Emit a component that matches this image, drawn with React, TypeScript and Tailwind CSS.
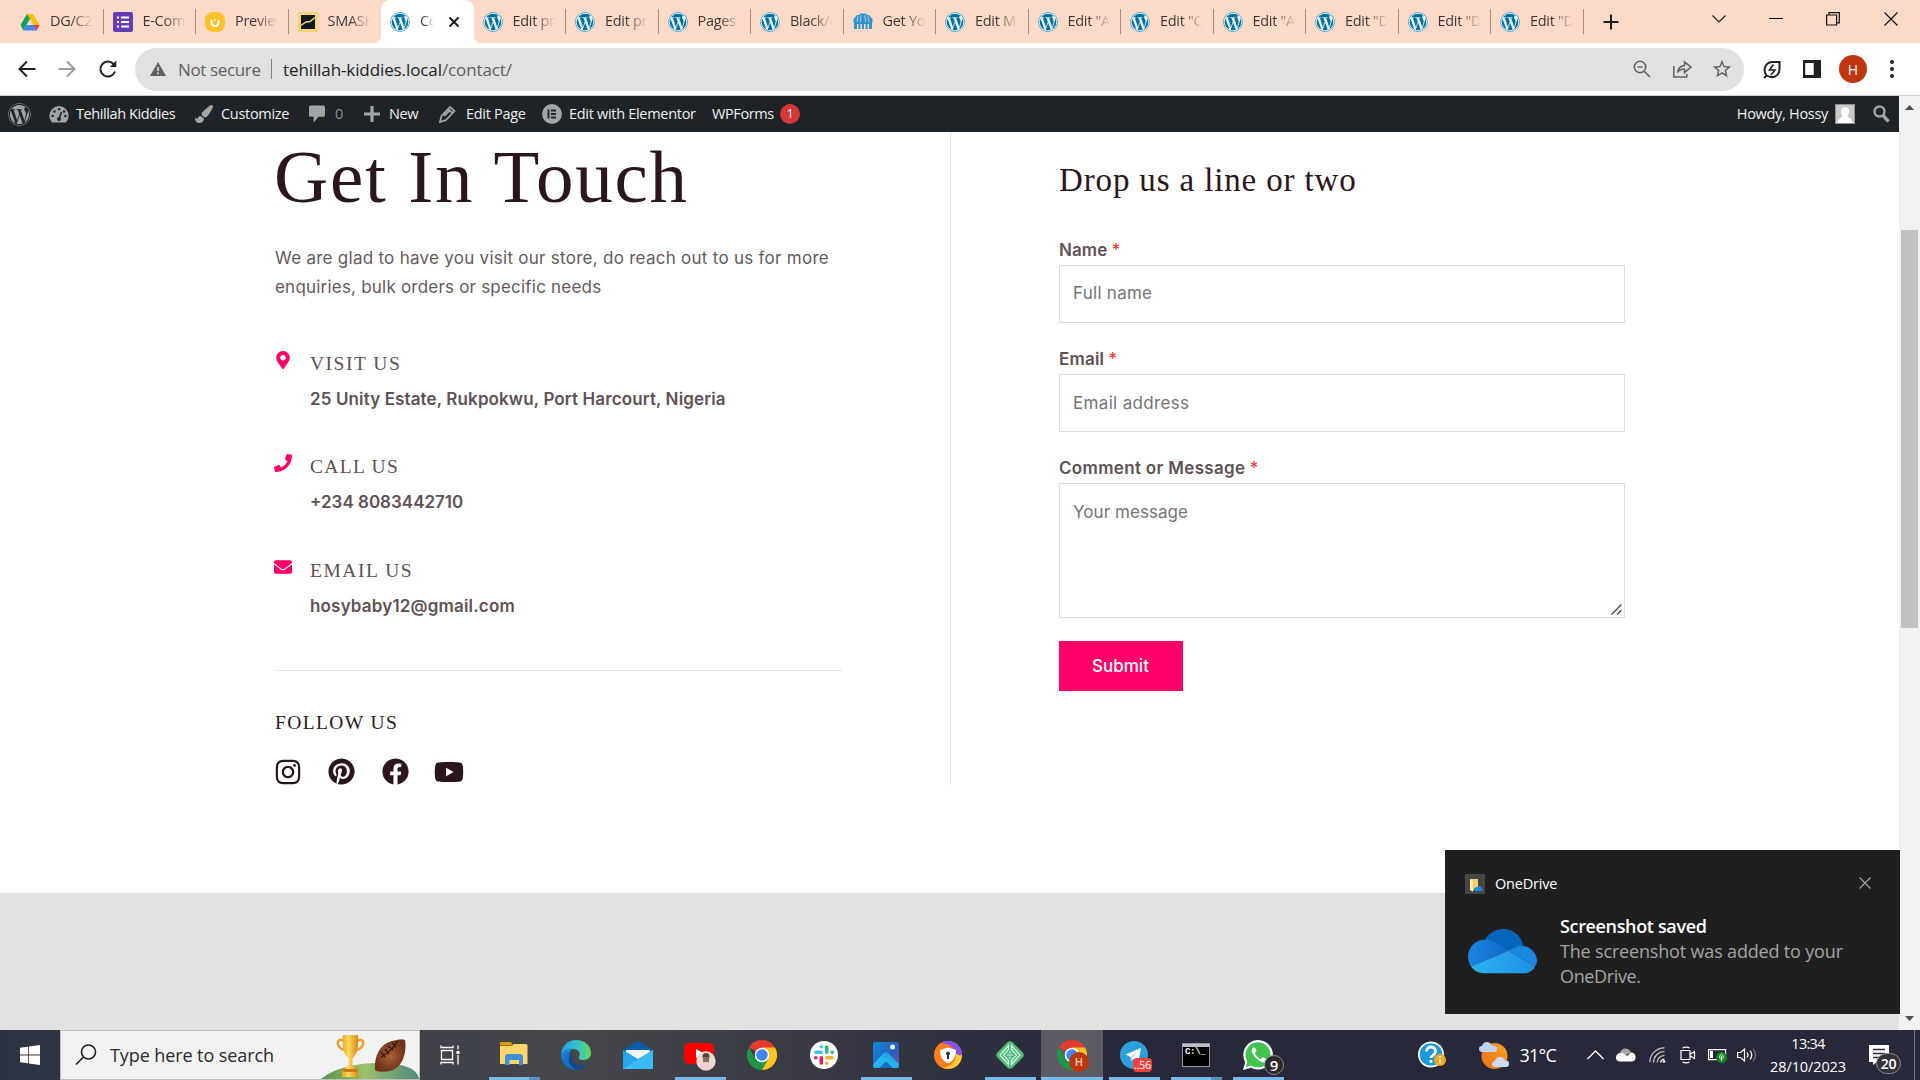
import type { ReactNode } from "react";
import { FaWordpress, FaFacebook, FaPinterest, FaYoutube, FaInstagram, FaPaintBrush, FaMapMarkerAlt, FaPhone, FaEnvelope } from "react-icons/fa";
import { MdStarOutline } from "react-icons/md";

/* ---------- favicons ---------- */
const WpFavicon = () => (
  <span className="flex size-5 items-center justify-center rounded-full bg-[#e9f1f4]">
    <FaWordpress size={20} color="#0073a3" />
  </span>
);
const Drive = () => (
  <svg width="20" height="20" viewBox="0 0 20 20">
    <path d="M7 2h6l-6.300 11L3.400 18.500.5 13z" fill="#12a15a" />
    <path d="M7 2h6l6.500 11h-6z" fill="#fbbc05" />
    <path d="M6.500 13h13l-3 5.500h-13z" fill="#4285f4" />
    <path d="M13.500 13h6l-3 5.500z" fill="#ea4335" />
    <path d="M10 7l3.500 6h-7z" fill="#fcdac8" />
  </svg>
);
const Forms = () => (
  <svg width="20" height="20" viewBox="0 0 20 20">
    <rect width="20" height="20" rx="2" fill="#673ab7" />
    <path d="M4 5.500h2M4 10h2M4 14.500h2M8 5.500h8M8 10h8M8 14.500h8" stroke="#fff" strokeWidth="2" />
  </svg>
);
const Smile = () => (
  <svg width="20" height="20" viewBox="0 0 20 20">
    <rect width="20" height="20" rx="8" fill="#fdc12a" />
    <path d="M6.500 8v2.500a3.500 3.500 0 0 0 7 0V8" fill="none" stroke="#fff" strokeWidth="2" />
    <circle cx="10" cy="8" r="1" fill="#fff" />
  </svg>
);
const Smash = () => (
  <svg width="20" height="20" viewBox="0 0 20 20">
    <rect width="20" height="20" rx="1" fill="#f8d477" />
    <rect x="3" y="3" width="14" height="14" fill="#101820" />
    <path d="M3 13.500l5-3.500 4-.5 5-4" fill="none" stroke="#f8d477" strokeWidth="1.400" />
  </svg>
);
const Store = () => (
  <svg width="20" height="17" viewBox="0 0 20 17">
    <path d="M4 2l2 0 1-1.500h6L14 2h2l3.500 4v3l-.5 1v6h-3v-5h-1.500v5h-2v-5h-1.500v5H9v-5H7.500v5h-2v-5H4v5H1v-6L.5 9V6z" fill="#2c94cf" />
    <path d="M5 3L4 9M8 2l-.5 7M12 2l.5 7M15 3l1 6" stroke="#fcdac8" strokeWidth=".7" />
  </svg>
);

type Tab = { title: string; icon: ReactNode; active?: boolean };
const wp = <WpFavicon />;
const tabs: Tab[] = [
  { title: "DG/C2", icon: <Drive /> },
  { title: "E-Com", icon: <Forms /> },
  { title: "Preview", icon: <Smile /> },
  { title: "SMASH", icon: <Smash /> },
  { title: "Co", icon: wp, active: true },
  { title: "Edit pr", icon: wp },
  { title: "Edit pr", icon: wp },
  { title: "Pages", icon: wp },
  { title: "Black/c", icon: wp },
  { title: "Get Yo", icon: <Store /> },
  { title: "Edit M", icon: wp },
  { title: 'Edit "A', icon: wp },
  { title: 'Edit "C', icon: wp },
  { title: 'Edit "A', icon: wp },
  { title: 'Edit "D', icon: wp },
  { title: 'Edit "D', icon: wp },
  { title: 'Edit "D', icon: wp },
];

function TabItem({ tab, divider }: { tab: Tab; divider: boolean }) {
  if (tab.active)
    return (
      <div className="relative flex h-full w-[92.500px] shrink-0 items-center rounded-t-[9px] bg-white pl-[9px]">
        <span className="absolute bottom-0 -left-2 size-2 bg-[radial-gradient(circle_at_0_0,#fcdac8_8px,#fff_8.500px)]" />
        <span className="absolute -right-2 bottom-0 size-2 bg-[radial-gradient(circle_at_100%_0,#fcdac8_8px,#fff_8.500px)]" />
        {tab.icon}
        <span className="ml-[10px] w-[14px] overflow-hidden bg-linear-to-r from-[#3c3a3a] from-30% to-transparent bg-clip-text pb-[2px] whitespace-nowrap text-transparent">{tab.title}</span>
        <svg className="ml-[14px]" width="12" height="12" viewBox="0 0 12 12" stroke="#1c1c1c" strokeWidth="2"><path d="M1.500 1.500l9 9M10.500 1.500l-9 9" /></svg>
      </div>
    );
  return (
    <div className="flex h-full w-[92.500px] shrink-0 items-center pl-[9px]">
      <span className="flex w-5 justify-center">{tab.icon}</span>
      <span className="ml-[10px] w-[43px] overflow-hidden bg-linear-to-r from-[#3c3432] from-50% to-transparent bg-clip-text pb-[2px] whitespace-nowrap text-transparent">{tab.title}</span>
      <span className={divider ? "ml-auto h-[25px] w-px bg-[#a08d85]" : "hidden"} />
    </div>
  );
}

function TabStrip() {
  return (
    <div className="flex h-[43px] shrink-0 items-center bg-[#fcdac8] pl-[11px] text-[14.500px] tracking-[-0.3px]">
      {tabs.map((t, i) => (
        <TabItem key={i} tab={t} divider={i !== 3} />
      ))}
      <svg className="ml-[19px]" width="16" height="16" viewBox="0 0 16 16" stroke="#1d1d1d" strokeWidth="2"><path d="M8 0.500v15M0.500 8h15" /></svg>
      <svg className="mt-[-6px] ml-[93px]" width="14" height="8" viewBox="0 0 14 8" fill="none" stroke="#222" strokeWidth="1.200"><path d="M.5.500L7 7 13.500.500" /></svg>
      <span className="mt-[-6px] ml-[43px] h-px w-[14px] bg-black" />
      <svg className="mt-[-6px] ml-[43px]" width="14" height="14" viewBox="0 0 14 14" fill="none" stroke="#111" strokeWidth="1.200"><path d="M.6 3h10v10H.6zM3 3V.6h10.300v10.300h-2.700" /></svg>
      <svg className="mt-[-6px] ml-[44px]" width="14" height="14" viewBox="0 0 14 14" stroke="#111" strokeWidth="1.200"><path d="M.5.500l13 13M13.500.500l-13 13" /></svg>
    </div>
  );
}

function Toolbar() {
  return (
    <div className="flex h-[53px] shrink-0 items-center border-b border-[#cfcfcf] bg-white text-[17px]">
      <svg className="ml-[18px]" width="18" height="18" viewBox="0 0 18 18" fill="none" stroke="#222" strokeWidth="2"><path d="M17.500 9H2M9 1.500L1.500 9 9 16.500" /></svg>
      <svg className="ml-[22px]" width="18" height="18" viewBox="0 0 18 18" fill="none" stroke="#9c9c9c" strokeWidth="2"><path d="M.5 9H16M9 1.500L16.500 9 9 16.500" /></svg>
      <svg className="ml-[22px]" width="20" height="20" viewBox="0 0 20 20" fill="none" stroke="#222" strokeWidth="2"><path d="M17 12.500A7.500 7.500 0 1 1 15.500 5l2 2" /><path d="M18.300 1.500V8h-6.500z" fill="#222" stroke="none" /></svg>
      <div className="ml-[17px] flex h-[43px] w-[1609px] items-center rounded-full bg-[#e1e1e1] pl-[15px] text-[#5f6063]">
        <svg width="16" height="14" viewBox="0 0 16 14"><path d="M8 0l8 14H0z" fill="#5f6063" /><path d="M8 5v4M8 10.500v1.700" stroke="#e1e1e1" strokeWidth="1.600" /></svg>
        <span className="ml-[12px] w-[83px] pt-[2px] tracking-[-0.36px] whitespace-nowrap">Not secure</span>
        <span className="mx-[10px] h-5 w-px bg-[#808184]" />
        <span className="ml-[1px] flex-1 pt-[2px] tracking-[-0.1px]"><span className="text-[#202124]">tehillah-kiddies.local</span>/contact/</span>
        <svg width="18" height="18" viewBox="0 0 18 18" fill="none" stroke="#5f6063" strokeWidth="1.600"><circle cx="7" cy="7" r="5.700" /><path d="M11.500 11.500L17 17M4.500 7h5" /></svg>
        <svg className="ml-[22px]" width="19" height="18" viewBox="0 0 19 18" fill="none" stroke="#5f6063" strokeWidth="1.500"><path d="M.8 6v11h13v-3M11.500 5.500V1.800L18 7.200l-6.500 5.400V9c-3.500 0-5.500 1-7 3.500.5-4 3-6.500 7-7z" /></svg>
        <MdStarOutline className="mr-[11px] ml-[19px]" size={22} />
      </div>
      <svg className="ml-[19px]" width="18" height="19" viewBox="0 0 18 19" fill="none" stroke="#202124" strokeWidth="2"><path d="M1 18l2.500-2.500C-.5 10 2 2 10 2h6.500v7c0 7.500-7 10-13 6.500" /><path d="M10.500 4.500L6.500 10H12l-4 5" strokeWidth="1.600" /></svg>
      <svg className="ml-[22px]" width="18" height="18" viewBox="0 0 18 18"><path d="M0 0h18v18H0z" fill="#202124" /><path d="M2.200 3h8.500v12H2.200z" fill="#fff" /></svg>
      <span className="ml-[18px] flex size-7 items-center justify-center rounded-full bg-[#c1350f] text-[14px] text-white">H</span>
      <span className="ml-[23px] flex flex-col gap-[3px]">
        <i className="size-1 rounded-full bg-[#202124]" /><i className="size-1 rounded-full bg-[#202124]" /><i className="size-1 rounded-full bg-[#202124]" />
      </span>
    </div>
  );
}

function AdminBar() {
  return (
    <div className="flex h-9 shrink-0 items-center bg-[#1d2327] text-[14.500px] tracking-[-0.4px] whitespace-nowrap text-[#f0f0f1]">
      <FaWordpress className="ml-2" size={23} color="#a0a5aa" />
      <svg className="ml-[18px]" width="20" height="17" viewBox="0 0 20 17"><path d="M3 16.500A9.700 9.700 0 1 1 17 16.500z" fill="#a0a5aa" /><path d="M10 13l2.500-7" stroke="#1d2327" strokeWidth="1.600" /><g fill="#1d2327"><circle cx="10" cy="13" r="2" /><circle cx="3.600" cy="10" r="1.200" /><circle cx="5.500" cy="5.500" r="1.200" /><circle cx="10" cy="3.300" r="1.200" /><circle cx="16.400" cy="10" r="1.200" /><circle cx="15" cy="5.500" r="1.200" /></g></svg>
      <span className="ml-[7px] w-[102px] tracking-[-0.4px]">Tehillah Kiddies</span>
      <FaPaintBrush className="ml-[17px]" size={18} color="#a0a5aa" />
      <span className="ml-[8px] w-[69px] tracking-[-0.3px]">Customize</span>
      <svg className="ml-[19px]" width="16" height="18" viewBox="0 0 17 18" fill="#a0a5aa"><path d="M2 0h13a2 2 0 0 1 2 2v8a2 2 0 0 1-2 2h-5l-5 6v-6H2a2 2 0 0 1-2-2V2a2 2 0 0 1 2-2z" /></svg>
      <span className="ml-[10px] w-[9px] text-[#8d9297]">0</span>
      <svg className="ml-[20px]" width="16" height="16" viewBox="0 0 16 16" stroke="#a0a5aa" strokeWidth="3.200"><path d="M8 0v16M0 8h16" /></svg>
      <span className="ml-[9px] w-[31px]">New</span>
      <svg className="ml-[19px]" width="17" height="18" viewBox="0 0 17 18" fill="none" stroke="#a0a5aa" strokeWidth="1.800"><path d="M1 17l1.500-6L11 2l4.500 4-8.500 9zM9 4l4.500 4M5 11l6-6" /></svg>
      <span className="ml-[10px] w-[61px] tracking-[-0.3px]">Edit Page</span>
      <svg className="ml-[15px]" width="20" height="20" viewBox="0 0 20 20"><circle cx="10" cy="10" r="10" fill="#a0a5aa" /><path d="M6.500 5.500v9M9 6.500h5M9 10h5M9 13.500h5" stroke="#1d2327" strokeWidth="1.900" /></svg>
      <span className="ml-[7px] w-[127px] tracking-[-0.3px]">Edit with Elementor</span>
      <span className="ml-[16px] w-[62px] tracking-[-0.4px]">WPForms</span>
      <span className="ml-[6px] flex size-5 items-center justify-center rounded-full bg-[#d63638] text-[12px] text-white">1</span>
      <span className="ml-auto tracking-[-0.3px]">Howdy, Hossy</span>
      <svg className="ml-[7px]" width="20" height="20" viewBox="0 0 20 20"><path d="M0 0h20v20H0z" fill="#c9c9c9" /><path d="M10 3c3 0 4 2.200 4 4.500 0 2-.7 3.500-1.500 4.300 0 2 4.500 2.200 5 7.200h-15c.5-5 5-5.200 5-7.200C6.700 11 6 9.500 6 7.500 6 5.200 7 3 10 3z" fill="#fff" /><path d="M.5.500h19v19H.5z" fill="none" stroke="#8c8f94" /></svg>
      <svg className="mr-[9px] ml-[18px]" width="17" height="18" viewBox="0 0 17 18" fill="none" stroke="#a0a5aa"><circle cx="6.500" cy="6.500" r="5" strokeWidth="2.400" /><path d="M10 10.500l5.500 6" strokeWidth="3.400" /></svg>
    </div>
  );
}

/* ---------- contact page ---------- */
const contacts = [
  { icon: <FaMapMarkerAlt size={18} />, label: "VISIT US", value: "25 Unity Estate, Rukpokwu, Port Harcourt, Nigeria", tracking: "tracking-[1.5px]", valueTracking: "tracking-[0.12px]" },
  { icon: <FaPhone size={18} />, label: "CALL US", value: "+234 8083442710", tracking: "tracking-[1.3px]", valueTracking: "tracking-[0px]" },
  { icon: <FaEnvelope size={18} />, label: "EMAIL US", value: "hosybaby12@gmail.com", tracking: "tracking-[1.55px]", valueTracking: "tracking-[0.18px]" },
];

function ContactInfo() {
  return (
    <section className="ml-[275px] h-[653px] w-[676px] border-r border-[#e6e4e5]">
      <h1 className="-ml-px h-[88px] font-['Liberation_Serif',serif] text-[75px] leading-[89px] tracking-[1.8px] text-[#2b161b]">Get In Touch</h1>
      <p className="mt-[24px] whitespace-nowrap text-[#66595d] leading-[29.300px]">
        <span className="tracking-[0.27px]">We are glad to have you visit our store, do reach out to us for more</span><br />
        <span className="tracking-[0.21px]">enquiries, bulk orders or specific needs</span>
      </p>
      <div className="mt-[49px] flex flex-col gap-[44.900px]">
        {contacts.map((c) => (
          <div key={c.label} className="flex">
            <span className="-mt-[1px] -ml-px flex w-[18px] justify-center text-[#ff0069]">{c.icon}</span>
            <div className="ml-[18px] flex flex-col gap-[11px] whitespace-nowrap text-[#5f5155]">
              <span className={`h-6 font-['Liberation_Serif',serif] text-[19.500px] leading-6 ${c.tracking}`}>{c.label}</span>
              <span className={`h-6 leading-6 font-semibold ${c.valueTracking}`}>{c.value}</span>
            </div>
          </div>
        ))}
      </div>
      <hr className="mt-[51.400px] w-[567px] border-[#e6e4e5]" />
      <h2 className="mt-[40px] h-6 font-['Liberation_Serif',serif] text-[19.500px] leading-6 tracking-[1.4px] text-[#2b161b]">FOLLOW US</h2>
      <div className="mt-[23px] flex h-[28px] items-center text-[#2b161b]">
        <FaInstagram size={28} className="-ml-px" />
        <FaPinterest size={27} className="ml-[26px]" />
        <FaFacebook size={27} className="ml-[27px]" />
        <FaYoutube size={30} className="ml-[25px]" />
      </div>
    </section>
  );
}

const Label = ({ children }: { children: ReactNode }) => (
  <span className="h-[27.500px] leading-6 font-semibold text-[#5f5155]">
    {children} <span className="font-normal text-[#ff2a1c]">*</span>
  </span>
);

function ContactForm() {
  return (
    <section className="ml-[108px] flex w-[566px] flex-col pt-[28px]">
      <h2 className="h-10 font-['Liberation_Serif',serif] text-[33px] leading-10 tracking-[0.86px] text-[#2b161b]">Drop us a line or two</h2>
      <div className="mt-[37.500px] flex h-[109px] flex-col">
        <Label><span className="tracking-[0.1px]">Name</span></Label>
        <div className="h-[58px] border border-[#dcdcdc] px-[13px] leading-[55px] tracking-[0.26px] text-[#757575]">Full name</div>
      </div>
      <div className="flex h-[109px] flex-col">
        <Label><span className="tracking-[0.19px]">Email</span></Label>
        <div className="h-[58px] border border-[#dcdcdc] px-[13px] leading-[56px] tracking-[0.33px] text-[#757575]">Email address</div>
      </div>
      <div className="flex flex-col">
        <Label><span className="tracking-[0.33px]">Comment or Message</span></Label>
        <div className="flex h-[135px] items-end justify-between border border-[#dcdcdc] pl-[13px] text-[#757575]">
          <span className="self-start leading-[57px] tracking-[0.06px]">Your message</span>
          <svg className="m-[2px]" width="11" height="11" viewBox="0 0 11 11" stroke="#444" strokeWidth="1.300"><path d="M.5 10.500l10-10M6 10.500L10.500 6" /></svg>
        </div>
      </div>
      <div className="mt-[23px] h-[50px] w-[124px] bg-[#ff0069] pr-px text-center text-[17px] leading-[50px] font-medium text-white">Submit</div>
    </section>
  );
}

/* ---------- notification ---------- */
const Cloud = ({ w }: { w: number }) => (
  <svg width={w} viewBox="0 0 70 46">
    <defs>
      <linearGradient id="cloudLeft" x1="0" x2="1"><stop stopColor="#1b86e0" /><stop offset="1" stopColor="#1267c8" /></linearGradient>
      <linearGradient id="cloudBase" x1="0" x2="1"><stop stopColor="#2bb3f0" /><stop offset="1" stopColor="#1f8fe5" /></linearGradient>
    </defs>
    <path d="M17 11C22 3 29 0 36 0c10 0 18 7 20 17L41 24z" fill="#0565b9" />
    <path d="M17 11C7 11 0 19 0 28c0 4 1 7 3 10l38-16-12-8c-4-2-8-3-12-3z" fill="url(#cloudLeft)" />
    <path d="M41 22l11-5c9-1 18 6 18 15 0 3-1 4-2 6z" fill="#1a86dc" />
    <path d="M3 38l38-16 27 16c-2 4-6 7-12 7H17C11 45 6 42 3 38z" fill="url(#cloudBase)" />
  </svg>
);

function Toast() {
  return (
    <aside className="absolute right-[20px] bottom-[66px] h-[164px] w-[455px] bg-[#1f1f1f] pt-[24px] pl-[20px] text-white">
      <div className="flex h-5 items-center">
        <svg width="20" height="20" viewBox="0 0 20 20"><path d="M0 0h20v20H0z" fill="#464646" /><path d="M5 5h8v11H7z" fill="#f5cf6c" /><path d="M5 5l3 1.500V18l-3-2z" fill="#ffe9a8" /><path d="M9 15.500c0-2 2-2.500 3-2 1-2.500 4.500-1.500 4.500.5 2 0 2 3 0 3H11c-1.500 0-2-.7-2-1.500z" fill="#1b8ae0" /></svg>
        <span className="ml-[10px] text-[14.500px] tracking-[-0.2px]">OneDrive</span>
        <svg className="mt-[-3px] mr-[29px] ml-auto" width="12" height="12" viewBox="0 0 12 12" stroke="#a5a5a5" strokeWidth="1.200"><path d="M.5.500l11 11M11.500.500l-11 11" /></svg>
      </div>
      <div className="mt-[20px] flex text-[18px] leading-[25px]">
        <span className="mt-[15px] ml-[3px]"><Cloud w={69} /></span>
        <div className="ml-[23px] whitespace-nowrap text-[#a5a5a5]">
          <p className="font-semibold tracking-[-0.35px] text-white">Screenshot saved</p>
          <p className="tracking-[-0.17px]">The screenshot was added to your</p>
          <p className="tracking-[-0.37px]">OneDrive.</p>
        </div>
      </div>
    </aside>
  );
}

/* ---------- taskbar ---------- */
const Chrome = () => (
  <svg width="30" height="30" viewBox="0 0 30 30">
    <path d="M15 15L2 7.500A15 15 0 0 1 28 7.500z" fill="#e33b2e" />
    <path d="M15 15V7.500h13A15 15 0 0 1 15 30l-3-3z" fill="#fcc31e" />
    <path d="M15 15l6.500 3.700L15 30A15 15 0 0 1 2 7.500l6.500 11.300z" fill="#1e9547" />
    <circle cx="15" cy="15" r="7.300" fill="#fff" />
    <circle cx="15" cy="15" r="5.800" fill="#4086f4" />
  </svg>
);
const Explorer = () => (
  <svg className="-mt-[2px]" width="28" height="24" viewBox="0 0 28 24">
    <path d="M0 1q0-1 1-1h10l2 3.500H0z" fill="#dd9b04" />
    <path d="M0 4h12l1.500-2H26q1.500 0 1.500 1.500V22H0z" fill="#ffd667" />
    <path d="M5 23V15q0-3 3-3h12q3 0 3 3v8h-4v-5H9.500v5z" fill="#3d8fdd" />
  </svg>
);
const Edge = () => (
  <svg width="30" height="30" viewBox="0 0 30 30">
    <defs>
      <linearGradient id="edgeTop" x1="0" x2="1"><stop stopColor="#23a7e8" /><stop offset=".6" stopColor="#36c5c4" /><stop offset="1" stopColor="#66dc4e" /></linearGradient>
      <linearGradient id="edgeSide" x1="0" y1="0" x2="0" y2="1"><stop stopColor="#1b8fe0" /><stop offset="1" stopColor="#0b5cb0" /></linearGradient>
    </defs>
    <path d="M.2 14C1 6 7 0 15 0c9 0 15 6 15 13 0 5-4 7-8 7-3 0-5-1-4-3 2-3 0-8-6-8C6 9 2 11 .2 14z" fill="url(#edgeTop)" />
    <path d="M.2 14C2 10 6 8 11 9c-4 3-5 12 4 20.500C6 30-1 23 .2 14z" fill="url(#edgeSide)" />
    <path d="M11.500 13c-3 6 2 13 9 12.500 3-.2 5-1.500 6-2-2 4-7 7-12 6.500C7 27 5 17 11.500 13z" fill="#114a8b" />
    <path d="M8 12c-3 7 0 14 7 18C8 29 3 23 4 17c.5-2 2-4 4-5z" fill="#1473c8" />
  </svg>
);
const Mail = () => (
  <svg width="30" height="28" viewBox="0 0 30 28">
    <path d="M0 9L15 0l15 9v3H0z" fill="#0a5bab" />
    <path d="M3 9h24v12H3z" fill="#f4f4f4" />
    <path d="M0 9l15 9L30 9v19H0z" fill="#26a5ea" />
    <path d="M0 28l30-19v19z" fill="#3bbcf4" />
  </svg>
);
const YouTubeProfile = () => (
  <svg className="mt-[3px]" width="32" height="28" viewBox="0 0 32 28">
    <rect width="30" height="21" rx="5" fill="#fe0000" />
    <path d="M12 6l8 4.500-8 4.500z" fill="#fff" />
    <circle cx="22" cy="18" r="9.700" fill="#e6dcd2" />
    <circle cx="22" cy="13.500" r="3.500" fill="#5b4038" />
    <path d="M19 14h6v8h-6z" fill="#8b6a60" />
    <path d="M15 24c1-4 4-5 7-5s6 1 7 5a9.700 9.700 0 0 1-14 0z" fill="#f3cfd2" />
  </svg>
);
const Slack = () => (
  <svg width="28" height="28" viewBox="0 0 28 28">
    <circle cx="14" cy="14" r="14" fill="#fff" />
    <g strokeWidth="3.600" strokeLinecap="round">
      <path d="M6 11.300h5.200M11.300 5.800h0" stroke="#36c5f0" />
      <path d="M16.700 6v5.200M22.200 11.300h0" stroke="#2eb67d" />
      <path d="M22 16.700h-5.200M16.700 22.200h0" stroke="#ecb22e" />
      <path d="M11.300 22v-5.200M5.800 16.700h0" stroke="#e01e5a" />
    </g>
  </svg>
);
const Photos = () => (
  <svg width="26" height="26" viewBox="0 0 26 26">
    <defs>
      <linearGradient id="photoSky" x1="0" x2="1" y1="0" y2="1"><stop stopColor="#0f8be0" /><stop offset=".6" stopColor="#2a5cb8" /><stop offset="1" stopColor="#8050b0" /></linearGradient>
      <linearGradient id="photoHill" x1="1" x2="0" y1="0" y2="1"><stop stopColor="#1683cf" /><stop offset=".5" stopColor="#25b5f0" /></linearGradient>
    </defs>
    <rect width="26" height="26" rx="2.500" fill="url(#photoSky)" />
    <path d="M0 22.500l10.500-11.500q2.500-2 5 0L26 22v1.500q0 2.500-2.500 2.500h-21Q0 26 0 23.500z" fill="url(#photoHill)" />
    <path d="M6 26l7-6.500L20 26z" fill="#1670bd" />
    <circle cx="19.500" cy="5" r="2.500" fill="#e8f3ff" />
  </svg>
);
const SecureBrowser = () => (
  <svg width="28" height="28" viewBox="0 0 28 28">
    <circle cx="14" cy="14" r="14" fill="#ff7d1a" />
    <path d="M8 1.300A14 14 0 0 1 28 14c-3 2-6 0-7-4C19 4 12 4 8 1.300z" fill="#8350f5" />
    <path d="M28 14A14 14 0 0 1 8 26.500c8 0 14-5 14-14 2 2 4 2.500 6 1.500z" fill="#fbcb2f" />
    <path d="M14 6.500l8 2.500c0 7-3 11-8 13.500C9 20 6 16 6 9z" fill="#fff" />
    <circle cx="14" cy="12.500" r="2" fill="#29304f" /><path d="M13 13h2v5h-2z" fill="#29304f" />
  </svg>
);
const LocalApp = () => (
  <svg width="30" height="30" viewBox="0 0 30 30" fill="none">
    <rect x="4.200" y="4.200" width="21.600" height="21.600" rx="4" transform="rotate(45 15 15)" fill="#51bb7b" />
    <path d="M13.500 5.500L5 15l8.500 9.500v-4L8.500 15l5-5.500zM16.500 5.500L25 15l-8.500 9.500v-4l5-5.500-5-5.500zM12 15h6" stroke="#d9f5e4" strokeWidth="1.200" />
    <circle cx="15" cy="12.300" r=".9" fill="#d9f5e4" /><circle cx="15" cy="17.700" r=".9" fill="#d9f5e4" />
  </svg>
);
const ChromeProfile = () => (
  <span className="relative flex">
    <Chrome />
    <span className="absolute -right-[2px] -bottom-[2px] flex size-[20px] items-center justify-center rounded-full bg-[#bf360c] text-[11px] font-semibold text-[#f0cfc4]">H</span>
  </span>
);
const Telegram = () => (
  <span className="relative flex">
    <svg width="28" height="28" viewBox="0 0 28 28"><circle cx="14" cy="14" r="14" fill="#2ba0da" /><path d="M5.500 13.500L21 7l-2.700 14-4.600-3.300-2.300 2.600-.8-4.300z" fill="#fff" /><path d="M10.600 16L18 10l-5 6.800-1.600 3.500z" fill="#c6daea" /></svg>
    <span className="absolute -right-[4px] -bottom-[3px] rounded-[4px] bg-[#f5413d] px-[1px] text-[11px] leading-[14px] tracking-[-0.3px] text-white">..56</span>
  </span>
);
const Terminal = () => (
  <span className="-mt-px flex h-[24px] w-[28px] flex-col border border-[#9a9a9a] bg-black">
    <span className="h-[3px] bg-[#b9c1cb]" />
    <span className="pl-[2px] font-['Liberation_Mono',monospace] text-[9px] leading-[10px] font-bold tracking-[-0.3px] text-white">C:\_</span>
  </span>
);
const WhatsApp = () => (
  <span className="relative flex">
    <svg width="30" height="30" viewBox="0 0 30 30"><path d="M15 0a14.800 14.800 0 1 1-7 27.800L0 30l2.200-7.800A14.800 14.800 0 0 1 15 0z" fill="#fff" /><circle cx="15" cy="14.800" r="12.500" fill="#40c351" /><path d="M4.500 20l-1.500 7 7-2z" fill="#40c351" /><path d="M10.500 7.500c-3 1.500-2 6 2.500 10.500s9 5.500 10.300 2.700c.6-1.600.2-2-3.300-3.500-1 0-1.500 2-2.500 1.800-2-.8-4.500-3-5.500-5.500 0-1 1.500-1.500 1.500-2.500-1.200-3.500-1.500-3.700-3-3.500z" fill="#fff" /></svg>
    <span className="absolute -right-[11px] -bottom-[5px] flex size-[20px] items-center justify-center rounded-full border border-[#8a8a8a] bg-[#2a2a2c] text-[15px] leading-none font-semibold text-white">9</span>
  </span>
);

type TaskbarApp = { icon: ReactNode; line?: boolean; stacked?: boolean; active?: boolean };
const apps: TaskbarApp[] = [
  { icon: <Explorer />, line: true, stacked: true },
  { icon: <Edge /> },
  { icon: <Mail /> },
  { icon: <YouTubeProfile />, line: true },
  { icon: <Chrome /> },
  { icon: <Slack /> },
  { icon: <Photos />, line: true },
  { icon: <SecureBrowser /> },
  { icon: <LocalApp />, line: true },
  { icon: <ChromeProfile />, active: true },
  { icon: <Telegram />, line: true },
  { icon: <Terminal />, line: true, stacked: true },
  { icon: <WhatsApp />, line: true },
];

function SearchBox() {
  return (
    <div className="relative flex h-[50px] w-[360px] shrink-0 items-center border border-[#bdbdbd] bg-[#f2f2f2] pl-[14px] text-[18px] text-[#2b2b2b]">
      <svg width="22" height="22" viewBox="0 0 22 22" fill="none" stroke="#1e1e1e" strokeWidth="1.600"><circle cx="13.500" cy="8" r="7" /><path d="M8.500 13L1 20.500" /></svg>
      <span className="ml-[13px] tracking-[-0.09px]">Type here to search</span>
      <svg className="absolute right-0 bottom-0" width="98" height="48" viewBox="0 0 98 48">
        <defs>
          <linearGradient id="hill" x1="0" x2="1"><stop stopColor="#58934c" /><stop offset=".45" stopColor="#9bc069" /><stop offset="1" stopColor="#4e8a7c" /></linearGradient>
          <linearGradient id="cup" x1="0" x2="1"><stop stopColor="#f3a421" /><stop offset=".4" stopColor="#fbd95f" /><stop offset="1" stopColor="#d98710" /></linearGradient>
          <radialGradient id="ball"><stop stopColor="#a85f37" /><stop offset="1" stopColor="#6f3319" /></radialGradient>
        </defs>
        <path d="M0 48C12 38 34 32 58 32s38 5 40 16z" fill="url(#hill)" />
        <path d="M24 9h-5c-3 0-4 7 4 10M36 9h4c3 0 4 7-4 10" fill="none" stroke="#eba126" strokeWidth="2.500" />
        <path d="M22 4h15c1 12-1 20-5.500 23v7l5.500 6v6H21v-6l6.500-6v-7C22 24 21 14 22 4z" fill="url(#cup)" />
        <path d="M22 38h15v3H22z" fill="#c97c16" />
        <path d="M84 9c2 12-2 28-15 31-6 1-15 1-15-1-1-14 5-26 17-29 5-1 9-2 13-1z" fill="url(#ball)" />
        <path d="M60 26c6-3 12-8 16-15M60 21l4 5M64 18l4 5M67 15l5 4M71 12l4 4" stroke="#351608" strokeWidth="1.300" fill="none" />
      </svg>
    </div>
  );
}

function Tray() {
  return (
    <div className="ml-auto flex h-full items-center text-white">
      <svg width="30" height="28" viewBox="0 0 30 28"><circle cx="13" cy="13.500" r="13" fill="#fff" /><circle cx="13" cy="13.500" r="11.300" fill="#1a9bd7" /><path d="M8.500 10.500c0-6 9-6 9 0 0 3.500-4.500 3.500-4.500 6.500M13 19v2.800" stroke="#fff" strokeWidth="2.800" fill="none" /><circle cx="22" cy="19" r="6" fill="#f3a81e" /><path d="M22 18v4.500M22 15v1.800" stroke="#fff" strokeWidth="1.600" /></svg>
      <svg className="ml-[31px]" width="31" height="28" viewBox="0 0 31 28">
        <defs><linearGradient id="sun" x1="1" x2="0" y1="0" y2="1"><stop stopColor="#f9a41f" /><stop offset="1" stopColor="#ee6b1b" /></linearGradient></defs>
        <circle cx="15.500" cy="15" r="13" fill="url(#sun)" />
        <path d="M3 11q-3 0-3-3t3-3q1-4 5-4 3 0 5 3.500 5-.5 5 3.500 0 3-3 3z" fill="#c0d2f4" />
        <path d="M16 26q-3 0-3-3t3-3q1-4 5-4 4 0 5 3.500 4-.5 4 3 0 3.500-3 3.500z" fill="#cbdaf7" />
      </svg>
      <span className="ml-[10px] text-[18px] tracking-[-0.8px]">31°C</span>
      <svg className="ml-[31px]" width="17" height="10" viewBox="0 0 17 10" fill="none" stroke="#fff" strokeWidth="1.300"><path d="M.5 9l8-8 8 8" /></svg>
      <svg className="ml-[12px]" width="20" height="14" viewBox="0 0 20 14"><path d="M4 5c1-6 10-6 11 0l-6 2z" fill="#a9a9ac" /><path d="M4 13.500c-6 0-5-9 1-8.500 3 0 5 2 6 3l4-3.500c6 0 6 9 1 9z" fill="#fff" /></svg>
      <svg className="ml-[13px]" width="17" height="16" viewBox="0 0 17 16" fill="none" stroke="#c9c9ce" strokeWidth="1.200"><path d="M.8 15A14.500 14.500 0 0 1 15.500.800M4.500 15.500A11 11 0 0 1 15.500 4.500M8 15.500A8 8 0 0 1 15.500 8.300" /><path d="M11.500 15.500a4.500 4.500 0 0 1 4-3.500" stroke="#fff" /><circle cx="15" cy="14.500" r="1.300" fill="#fff" stroke="none" /></svg>
      <svg className="ml-[14px]" width="16" height="18" viewBox="0 0 16 18" fill="none" stroke="#fff" strokeWidth="1.200"><path d="M1 4.500h9v9H1zM10.500 8l4-2.500v7L10.500 10M2.500 2Q6 .200 9.500 2M2.500 16q3.500 1.800 7 0" /></svg>
      <svg className="ml-[12px]" width="19" height="16" viewBox="0 0 19 16"><path d="M.6 2.600h17v10H.6z" fill="none" stroke="#fff" strokeWidth="1.200" /><path d="M2 4h3v7H2z" fill="#fff" /><circle cx="13.500" cy="10.500" r="5.500" fill="#0f8a16" /><path d="M13.500 7c-2.500 2-2.500 4 0 5.500 2.500-1.500 2.500-3.500 0-5.500zM13.500 9v5" fill="none" stroke="#fff" /></svg>
      <svg className="ml-[10px]" width="20" height="18" viewBox="0 0 20 18" fill="none" stroke="#fff" strokeWidth="1.200"><path d="M.6 6.500h3L7.500 3v12L3.600 11.500h-3zM10 6.500q2 2.500 0 5M13 4.500q3.500 4.500 0 9" /><path d="M16 2.500q5 6.500 0 13" stroke="#77777f" /></svg>
      <div className="ml-[11px] flex w-[80px] flex-col items-center text-[14.500px] leading-[23px]">
        <span className="tracking-[-0.74px]">13:34</span>
        <span className="tracking-[-0.11px]">28/10/2023</span>
      </div>
      <span className="relative ml-[21px] flex w-[45px]">
        <svg width="20" height="20" viewBox="0 0 20 20"><path d="M0 0h20v17H8l-4 3v-3H0z" fill="#fff" /><path d="M4 4.500h12M4 8.500h12M4 12.500h7" stroke="#2a2a38" strokeWidth="1.300" /></svg>
        <span className="absolute top-[8px] left-[7px] flex h-[21px] w-[25px] items-center justify-center rounded-full border border-[#8b8b90] bg-[#33333b] text-[14px] font-semibold tracking-[-0.3px]">20</span>
      </span>
      <span className="mr-[5px] h-full w-px bg-[#7c7c84]" />
    </div>
  );
}

function Taskbar() {
  return (
    <footer className="flex h-[50px] shrink-0 items-center bg-linear-to-r from-[#2d3342] from-0% via-[#45474b] via-30% to-[#27283a] to-58%">
      <div className="flex w-[60px] justify-center">
        <svg width="20" height="20" viewBox="0 0 20 20" fill="#fff"><path d="M0 2.800L8.200 1.700v7.800H0zM9 1.600L20 0v9.500H9zM0 10.500h8.200v7.800L0 17.200zM9 10.500h11V20L9 18.400z" /></svg>
      </div>
      <SearchBox />
      <div className="flex w-[63px] justify-center pr-[3px]">
        <svg width="20" height="20" viewBox="0 0 20 20" fill="none" stroke="#fff" strokeWidth="1.300"><path d="M1.500 5.500h11v9h-11zM1 .5v2h12v-2M1 19.500v-2h12v2M18 .5v4M18 10v9.500" /><path d="M16.500 6h3v3h-3z" fill="#fff" stroke="none" /></svg>
      </div>
      {apps.map((a, i) => (
        <div key={i} className={`relative flex h-[50px] w-[62px] shrink-0 items-center justify-center ${a.active ? "bg-[#5d5c64]" : ""}`}>
          {a.icon}
          {a.active && <span className="absolute inset-x-0 bottom-0 h-[3px] bg-[#76b9ed]" />}
          {a.line && (
            <span className="absolute bottom-0 left-[6px] flex h-[3px] w-[51px] bg-[#76b9ed]">
              {a.stacked && <span className="ml-auto w-[11px] bg-[#5b8fbb]" />}
            </span>
          )}
        </div>
      ))}
      <Tray />
    </footer>
  );
}

function Scrollbar() {
  return (
    <div className="flex w-[21px] shrink-0 flex-col items-center bg-[#f1f1f1]">
      <svg className="mt-[9px]" width="9" height="5" viewBox="0 0 9 5"><path d="M4.500 0L9 5H0z" fill="#505050" /></svg>
      <span className="mt-[120px] h-[398px] w-[17px] bg-[#c1c1c1]" />
      <svg className="mt-auto mb-[9px]" width="9" height="5" viewBox="0 0 9 5"><path d="M0 0h9L4.500 5z" fill="#505050" /></svg>
    </div>
  );
}

export default function App() {
  return (
    <div className="relative flex h-[1080px] w-[1920px] flex-col overflow-hidden bg-white font-['Open_Sans',sans-serif]">
      <TabStrip />
      <Toolbar />
      <div className="flex min-h-0 flex-1">
        <div className="flex min-w-0 flex-1 flex-col">
          <AdminBar />
          <main className="flex h-[761px] shrink-0 bg-white font-['Inter',sans-serif] text-[17px]">
            <ContactInfo />
            <ContactForm />
          </main>
          <div className="flex-1 bg-[#e2e2e2]" />
        </div>
        <Scrollbar />
      </div>
      <Taskbar />
      <Toast />
    </div>
  );
}
